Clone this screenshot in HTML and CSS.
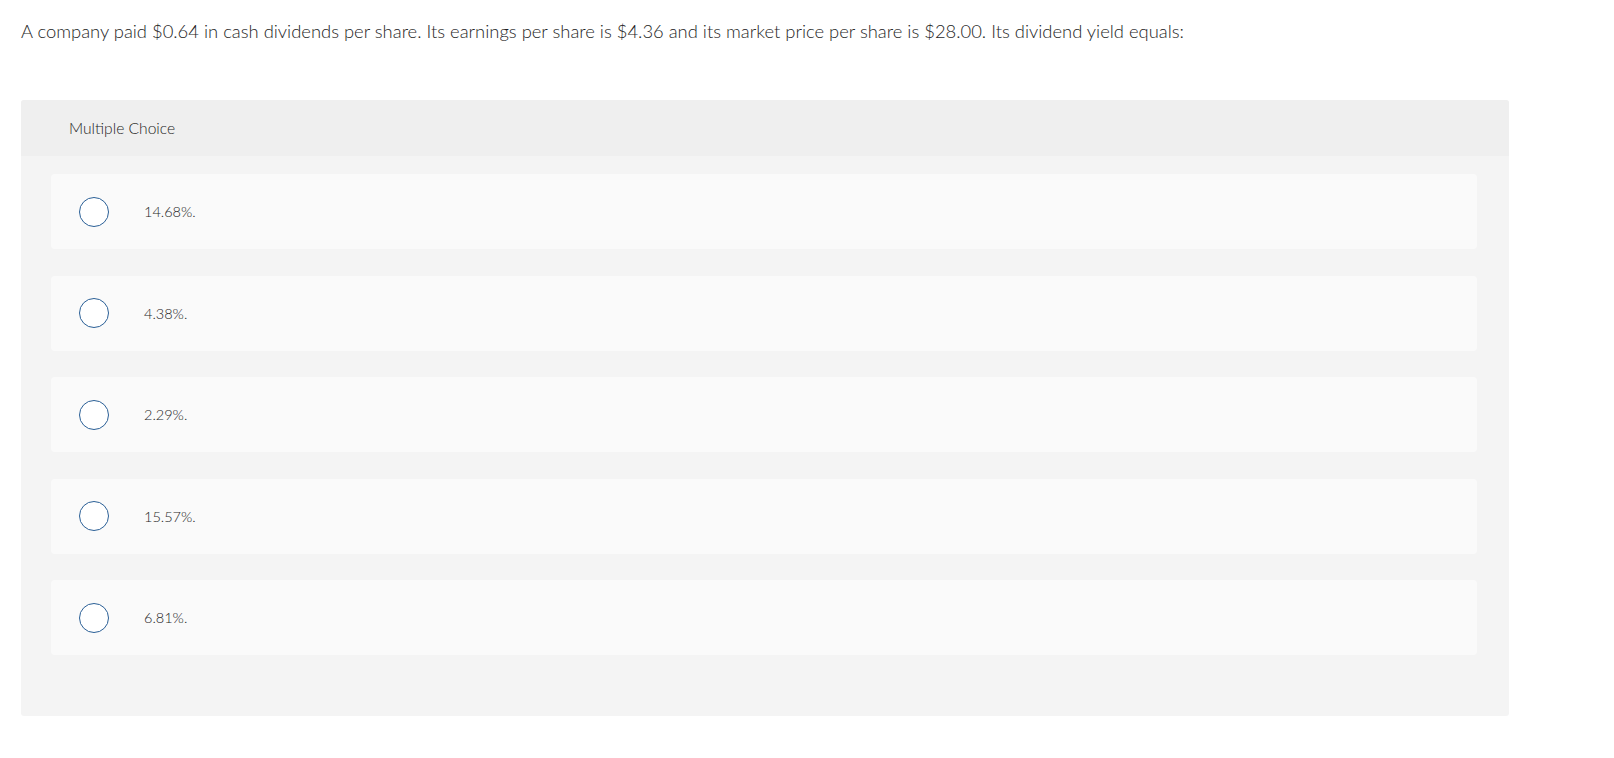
FILE: index.html
```html
<!DOCTYPE html>
<html lang="en">
<head>
<meta charset="utf-8">
<title>Multiple Choice</title>
<link rel="stylesheet" href="styles.css">
</head>
<body>
<div class="page">
  <p class="question">A company paid $0.64 in cash dividends per share. Its earnings per share is $4.36 and its market price per share is $28.00. Its dividend yield equals:</p>
  <section class="card">
    <header class="card-header">Multiple Choice</header>
    <div class="card-body">
      <div class="option"><span class="radio"></span><span class="label">14.68%.</span></div>
      <div class="option"><span class="radio"></span><span class="label">4.38%.</span></div>
      <div class="option"><span class="radio"></span><span class="label">2.29%.</span></div>
      <div class="option"><span class="radio"></span><span class="label">15.57%.</span></div>
      <div class="option"><span class="radio"></span><span class="label">6.81%.</span></div>
    </div>
  </section>
</div>
</body>
</html>
```
FILE: styles.css
```css
html, body {
  margin: 0;
  padding: 0;
  background: #ffffff;
}
body {
  font-family: Lato, "Liberation Sans", sans-serif;
  font-weight: 300;
  color: #1e1e1e;
}
.page {
  padding: 19px 0 0 21px;
  width: 1488px;
}
.question {
  margin: 0;
  font-size: 18.4px;
  line-height: 24px;
}
.card {
  margin-top: 57px;
  background: #f4f4f4;
  border-radius: 3px;
  overflow: hidden;
}
.card-header {
  height: 56px;
  background: #efefef;
  display: flex;
  align-items: center;
  padding-left: 48px;
  font-size: 15.6px;
}
.card-body {
  padding: 18px 32px 61px 30px;
  display: flex;
  flex-direction: column;
  gap: 26.5px;
}
.option {
  height: 75px;
  background: #fafafa;
  border-radius: 4px;
  display: flex;
  align-items: center;
  padding-left: 28px;
}
.radio {
  width: 28px;
  height: 28px;
  border: 1.5px solid #2a5f96;
  border-radius: 50%;
  background: #ffffff;
  flex: none;
}
.label {
  margin-left: 35px;
  font-size: 14.5px;
}
```
